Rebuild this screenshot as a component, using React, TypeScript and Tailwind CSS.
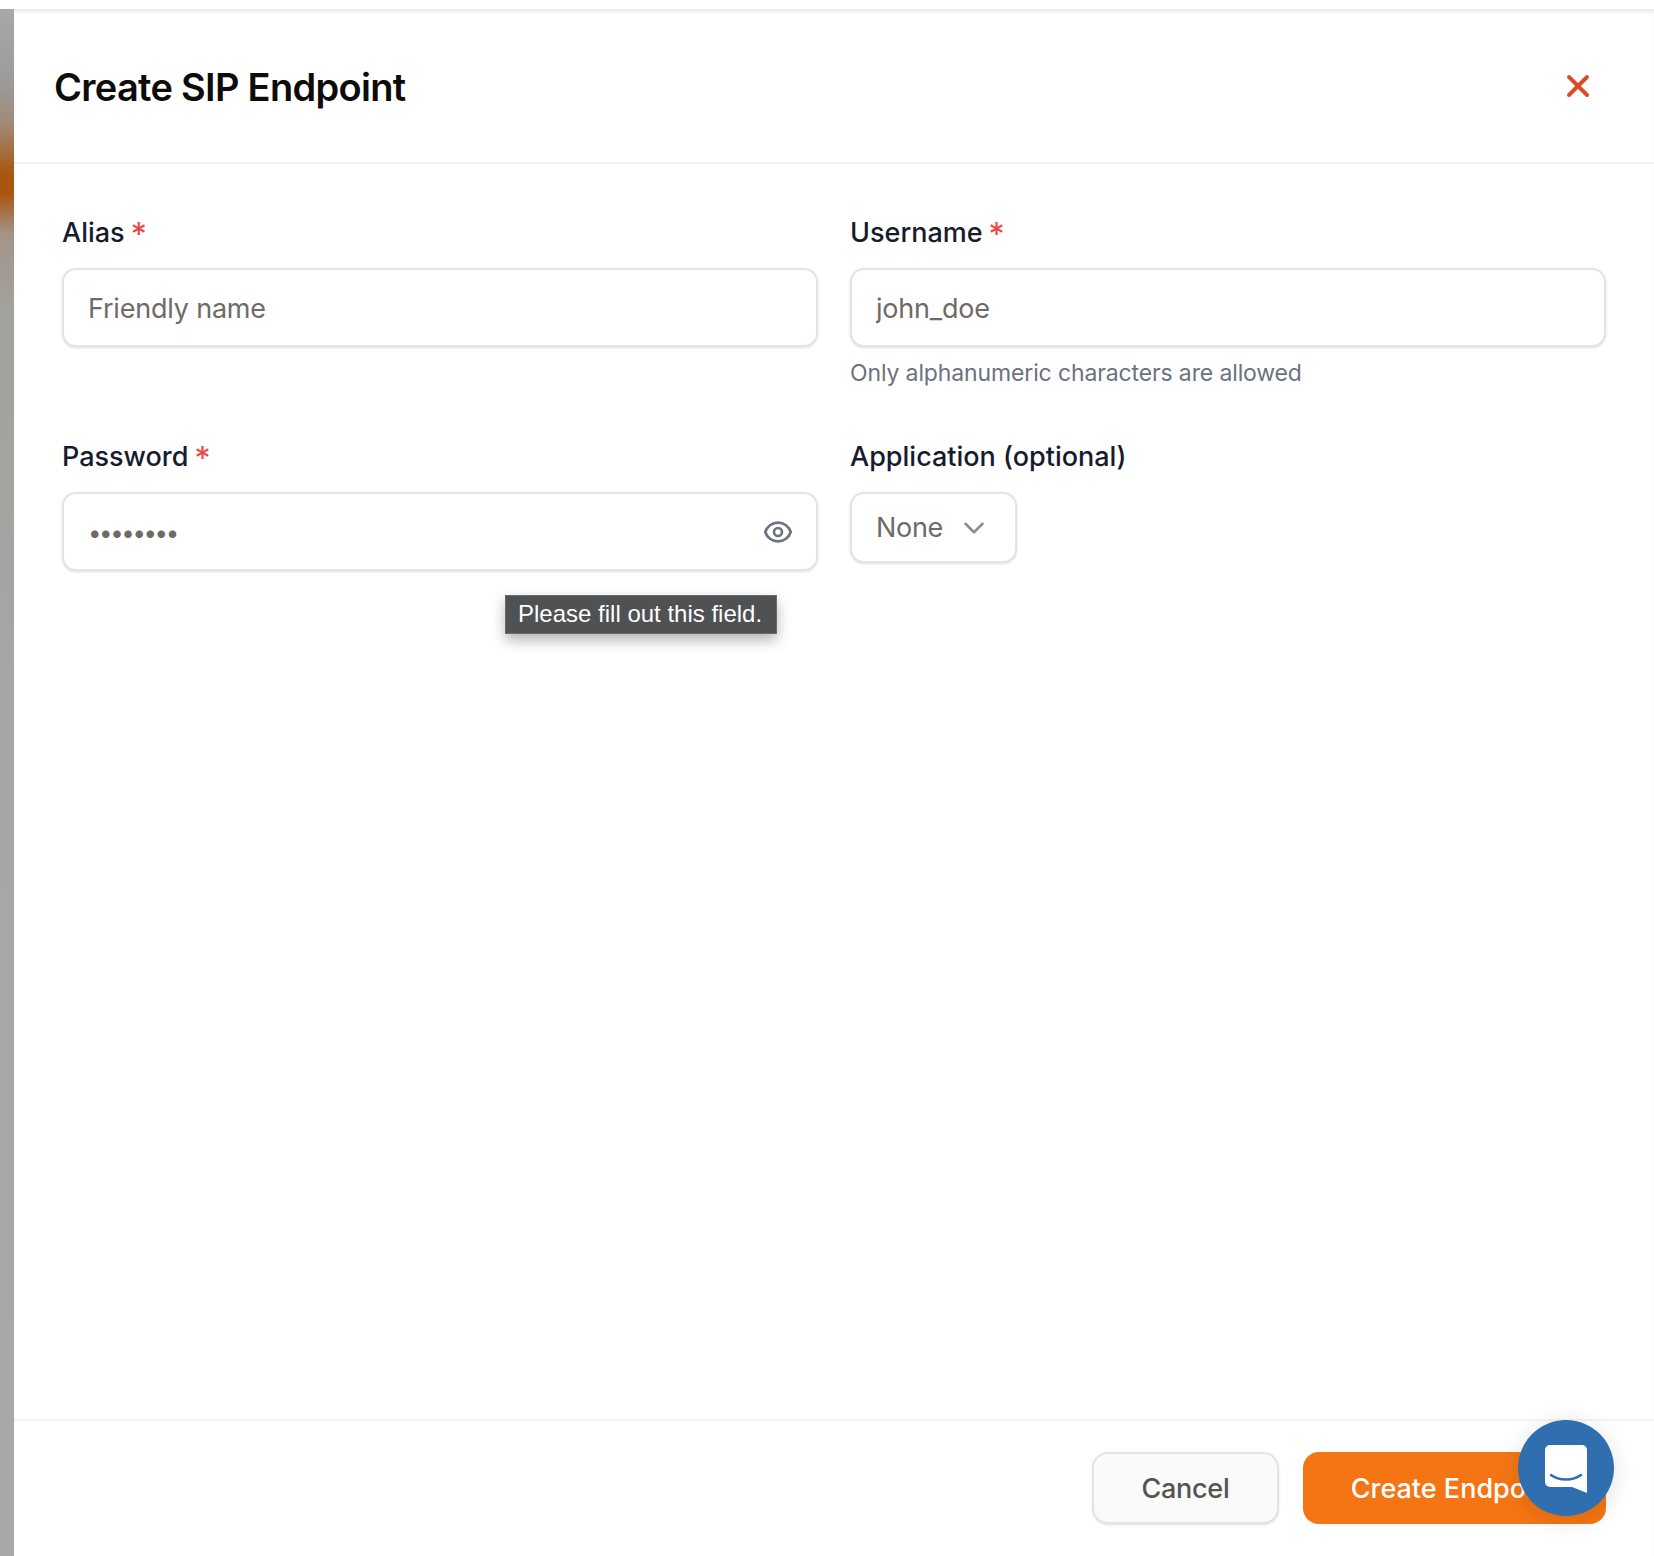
import { ChevronDown, X } from "lucide-react";
import { HiOutlineEye } from "react-icons/hi";

const font = "font-['Inter','Liberation_Sans',sans-serif]";

function Label({ text, required }: { text: string; required?: boolean }) {
  return (
    <label className="block h-[36px] text-[27px] leading-[38px] font-medium text-[#161b2e] tracking-[0px] mb-[18px] whitespace-nowrap">
      {text}
      {required && <span className="text-[#ef4444] ml-[6px] text-[32px] leading-none align-[-4px] font-normal">*</span>}
    </label>
  );
}

export default function App() {
  return (
    <div className={`${font} w-[1654px] h-[1556px] bg-white flex flex-col overflow-hidden relative`}>
      <div className="h-[9px] bg-white shrink-0" />
      <div className="flex flex-1 min-h-0">
        {/* page behind the drawer */}
        <div className="w-[14px] shrink-0 bg-[linear-gradient(180deg,#a9a8a5_0px,#9b9b9a_75px,#a08a78_115px,#a9560f_165px,#a9560f_185px,#a3948a_225px,#a3a19b_300px,#a6a6a6_700px,#a8a8a8_100%)]" />

        <div className="flex-1 min-w-0 flex flex-col shadow-[inset_0_5px_5px_-3px_#e3e3e8]">
          {/* Header */}
          <div className="h-[155px] shrink-0 border-b-2 border-[#f2f1f0] flex items-center justify-between pl-[40px] pr-[58px]">
            <h1 className="text-[38px] font-semibold text-[#0e0b0b] tracking-[-0.7px] pt-[4px]">Create SIP Endpoint</h1>
            <X className="w-[36px] h-[36px] text-[#dc4c23]" strokeWidth={2.6} />
          </div>

          {/* Form */}
          <div className="flex-1 px-[48px] pt-[50px]">
            <div className="grid grid-cols-2 gap-x-[32px] gap-y-[48px]">
              <div>
                <Label text="Alias" required />
                <input
                  placeholder="Friendly name"
                  className="w-full h-[79px] pl-[24px] pr-[24px] pt-[2px] rounded-[14px] border-2 border-[#e7e3e0] shadow-sm bg-white text-[27px] tracking-[-0.2px] placeholder:text-[#6f6a66] outline-none"
                />
              </div>
              <div>
                <Label text="Username" required />
                <input
                  placeholder="john_doe"
                  className="w-full h-[79px] pl-[24px] pr-[24px] pt-[2px] rounded-[14px] border-2 border-[#e7e3e0] shadow-sm bg-white text-[27px] tracking-[-0.2px] placeholder:text-[#6f6a66] outline-none"
                />
                <p className="mt-[9px] h-[34px] text-[23px] leading-[34px] text-[#6b7280] tracking-[-0.13px]">
                  Only alphanumeric characters are allowed
                </p>
              </div>
              <div>
                <Label text="Password" required />
                <div className="relative">
                  <input
                    type="password"
                    defaultValue="secret12"
                    className="w-full h-[79px] pl-[24px] pr-[60px] pt-[2px] rounded-[14px] border-2 border-[#e7e3e0] shadow-sm bg-white text-[24px] tracking-[-2.4px] text-[#6f6a66] outline-none"
                  />
                  <HiOutlineEye className="absolute right-[24px] top-[24px] w-[32px] h-[32px] text-[#6b7280]" />
                  <div className="absolute left-[443px] top-[103px] w-[272px] h-[39px] bg-[#505152] border border-[#6a6a6a] text-white text-[24px] leading-[35px] pl-[12px] whitespace-nowrap font-['Liberation_Sans',sans-serif] shadow-[0_6px_14px_rgba(0,0,0,0.3)]">
                    Please fill out this field.
                  </div>
                </div>
              </div>
              <div>
                <Label text="Application (optional)" />
                <div className="w-[167px] h-[71px] rounded-[14px] border-2 border-[#e7e3e0] shadow-sm bg-white flex items-center pl-[24px] gap-[14px]">
                  <span className="text-[27px] tracking-[-0.3px] text-[#6f6a66] pt-[2px]">None</span>
                  <ChevronDown className="w-[34px] h-[34px] text-[#8c8c8c]" strokeWidth={1.8} />
                </div>
              </div>
            </div>
          </div>

          {/* Footer */}
          <div className="h-[137px] shrink-0 border-t-2 border-[#f3f3f2] flex justify-end items-start gap-[24px] pt-[31px] pr-[48px]">
            <button className="w-[187px] h-[72px] pt-[2px] rounded-[16px] border-2 border-[#e7e3e0] bg-[#fafafa] shadow-sm text-[27px] font-medium tracking-[-0.3px] text-[#57534e]">
              Cancel
            </button>
            <button className="w-[303px] h-[72px] pt-[2px] rounded-[16px] bg-[#f57514] text-[27px] font-medium text-white">
              Create Endpoint
            </button>
          </div>
        </div>
      </div>

      {/* chat bubble */}
      <div className="absolute left-[1518px] top-[1420px] w-[96px] h-[96px] rounded-full bg-[#2f6eaf] flex items-center justify-center shadow-[0_4px_24px_rgba(0,0,0,0.12)]">
        <svg width="44" height="50" viewBox="0 0 44 50" className="mt-[2px]">
          <path d="M6 1h32a5 5 0 0 1 5 5v43l-15-6H6a5 5 0 0 1-5-5V6a5 5 0 0 1 5-5z" fill="#fff" />
          <path d="M7 31c8 6 22 6 30 0" fill="none" stroke="#2f6eaf" strokeWidth="2.5" strokeLinecap="round" />
        </svg>
      </div>
    </div>
  );
}
